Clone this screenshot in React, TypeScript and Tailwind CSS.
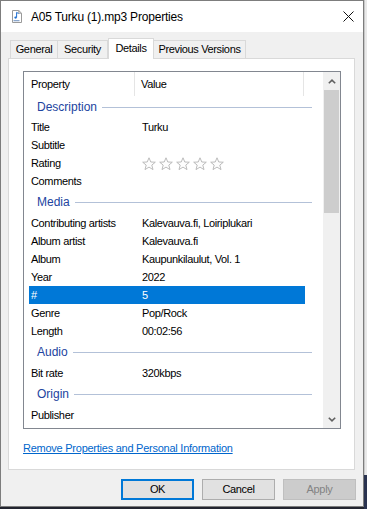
import React from "react";

type Row = { kind: "row"; name: string; value?: string; stars?: boolean; selected?: boolean };
type Group = { kind: "group"; name: string; first?: boolean };

const items: (Row | Group)[] = [
  { kind: "group", name: "Description", first: true },
  { kind: "row", name: "Title", value: "Turku" },
  { kind: "row", name: "Subtitle" },
  { kind: "row", name: "Rating", stars: true },
  { kind: "row", name: "Comments" },
  { kind: "group", name: "Media" },
  { kind: "row", name: "Contributing artists", value: "Kalevauva.fi, Loiriplukari" },
  { kind: "row", name: "Album artist", value: "Kalevauva.fi" },
  { kind: "row", name: "Album", value: "Kaupunkilaulut, Vol. 1" },
  { kind: "row", name: "Year", value: "2022" },
  { kind: "row", name: "#", value: "5", selected: true },
  { kind: "row", name: "Genre", value: "Pop/Rock" },
  { kind: "row", name: "Length", value: "00:02:56" },
  { kind: "group", name: "Audio" },
  { kind: "row", name: "Bit rate", value: "320kbps" },
  { kind: "group", name: "Origin" },
  { kind: "row", name: "Publisher" },
];

const Star = () => (
  <svg width="14" height="14" viewBox="0 0 14 14">
    <path
      d="M7 0.8 L8.8 5 L13.3 5.2 L9.8 8.1 L11 12.6 L7 10.1 L3 12.6 L4.2 8.1 L0.7 5.2 L5.2 5 Z"
      fill="#fdfdfd"
      stroke="#b4b4b4"
      strokeWidth="0.9"
      strokeLinejoin="round"
    />
  </svg>
);

const FileIcon = () => (
  <svg width="10" height="13" viewBox="0 0 10 13">
    <path d="M0.5 0.5H6.8L9.5 3.2V12.5H0.5Z" fill="#fff" stroke="#9a9a9a" />
    <path d="M6.8 0.5V3.2H9.5" fill="none" stroke="#9a9a9a" />
    <path d="M4.6 2.4V7.4 M4.6 2.4 L6.6 3.6" stroke="#1f6fd0" strokeWidth="1" fill="none" />
    <ellipse cx="3.6" cy="7.6" rx="1.3" ry="1.1" fill="#1f6fd0" />
    <rect x="1.5" y="10" width="6" height="1.3" fill="#8aa6cc" />
  </svg>
);

const tabs = [
  { label: "General", w: "w-[48px]" },
  { label: "Security", w: "w-[50px]" },
  { label: "Details", w: "w-[46px]", active: true },
  { label: "Previous Versions", w: "w-[92px]" },
];

export default function App() {
  return (
    <div className="w-[367px] h-[509px] bg-[#22242f] flex font-['Liberation_Sans',Arial,sans-serif] text-black overflow-hidden">
      {/* window */}
      <div className="w-[364px] h-[507px] border border-[#7d7d7d] bg-[#f0f0f0] flex flex-col shrink-0">
        {/* title bar */}
        <div className="h-[31px] bg-white flex items-center pl-[11px] shrink-0">
          <FileIcon />
          <span className="ml-[9px] text-[12px] tracking-[-0.2px]">A05 Turku (1).mp3 Properties</span>
          <div className="flex-1" />
          <svg width="11" height="11" viewBox="0 0 11 11" className="mr-[9px]">
            <path d="M0.5 0.5 L10.5 10.5 M10.5 0.5 L0.5 10.5" stroke="#111" strokeWidth="1" />
          </svg>
        </div>

        {/* body */}
        <div className="flex-1 flex flex-col pt-[6px] pl-[7px] pr-[7px] text-[11px] tracking-[-0.35px]">
          {/* tabs */}
          <div className="flex items-end h-[21px] -mb-px ml-[2px] relative z-10">
            {tabs.map((t, i) =>
              t.active ? (
                <div
                  key={t.label}
                  className={`${t.w} h-[21px] bg-white border border-b-0 border-[#d9d9d9] flex items-center justify-center pb-[1px]`}
                >
                  {t.label}
                </div>
              ) : (
                <div
                  key={t.label}
                  className={`${t.w} h-[19px] bg-[#f0f0f0] border border-[#d9d9d9] ${i > 0 ? "border-l-0" : ""} flex items-center justify-center`}
                >
                  {t.label}
                </div>
              )
            )}
          </div>

          {/* panel */}
          <div className="w-[347px] h-[412px] bg-white border border-[#d9d9d9] pt-[12px] pl-[14px] flex flex-col">
            <div className="w-[318px] h-[358px] border border-[#828790] flex overflow-hidden">
              {/* list */}
              <div className="flex-1 flex flex-col overflow-hidden">
                <div className="h-[24px] flex shrink-0">
                  <div className="w-[111px] pl-[7px] border-r border-[#e5e5e5] flex items-center">Property</div>
                  <div className="w-[169px] pl-[6px] border-r border-[#e5e5e5] flex items-center">Value</div>
                </div>
                {items.map((it, idx) =>
                  it.kind === "group" ? (
                    <div
                      key={idx}
                      className={`${it.first ? "h-[22px]" : "h-[24px]"} flex items-center pl-[13px] pr-[11px] shrink-0`}
                    >
                      <span className="text-[12px] tracking-normal text-[#2244a0]">{it.name}</span>
                      <div className="ml-[5px] flex-1 h-px bg-[#b3c1d8]" />
                    </div>
                  ) : (
                    <div
                      key={idx}
                      className={`ml-[5px] w-[276px] h-[18px] flex items-center shrink-0 ${it.selected ? "bg-[#0078d7] text-white" : ""}`}
                    >
                      <span className="w-[113px] pl-[2px] whitespace-nowrap">{it.name}</span>
                      {it.stars ? (
                        <span className="flex gap-[3px] pt-[1px]">
                          <Star />
                          <Star />
                          <Star />
                          <Star />
                          <Star />
                        </span>
                      ) : (
                        <span className="whitespace-nowrap">{it.value}</span>
                      )}
                    </div>
                  )
                )}
              </div>

              {/* scrollbar */}
              <div className="w-[17px] bg-[#f0f0f0] flex flex-col shrink-0">
                <div className="h-[18px] flex items-center justify-center">
                  <svg width="8" height="5" viewBox="0 0 8 5">
                    <path d="M0.8 4.3 L4 1.2 L7.2 4.3" fill="none" stroke="#606060" strokeWidth="1.6" />
                  </svg>
                </div>
                <div className="mx-[1px] h-[123px] bg-[#cdcdcd]" />
                <div className="flex-1" />
                <div className="h-[18px] flex items-center justify-center">
                  <svg width="8" height="5" viewBox="0 0 8 5">
                    <path d="M0.8 0.7 L4 3.8 L7.2 0.7" fill="none" stroke="#606060" strokeWidth="1.6" />
                  </svg>
                </div>
              </div>
            </div>

            <div className="mt-[11px]">
              <span className="text-[#0066cc] underline underline-offset-[1px] text-[11px] tracking-[-0.25px]">
                Remove Properties and Personal Information
              </span>
            </div>
          </div>

          {/* buttons */}
          <div className="mt-[9px] flex justify-end gap-[8px]">
            <div className="w-[73px] h-[21px] border-2 border-[#0078d7] bg-[#e1e1e1] flex items-center justify-center">
              OK
            </div>
            <div className="w-[73px] h-[21px] border border-[#adadad] bg-[#e1e1e1] flex items-center justify-center">
              Cancel
            </div>
            <div className="w-[73px] h-[21px] border border-[#bfbfbf] bg-[#cccccc] text-[#838383] flex items-center justify-center">
              Apply
            </div>
          </div>
        </div>
      </div>

      {/* desktop strip behind */}
      <div className="flex-1 flex flex-col">
        <div className="h-[475px] bg-[#e9e9e9] border-l border-[#c8c8c8]" />
        <div className="flex-1 bg-[#2a3350]" />
      </div>
    </div>
  );
}
